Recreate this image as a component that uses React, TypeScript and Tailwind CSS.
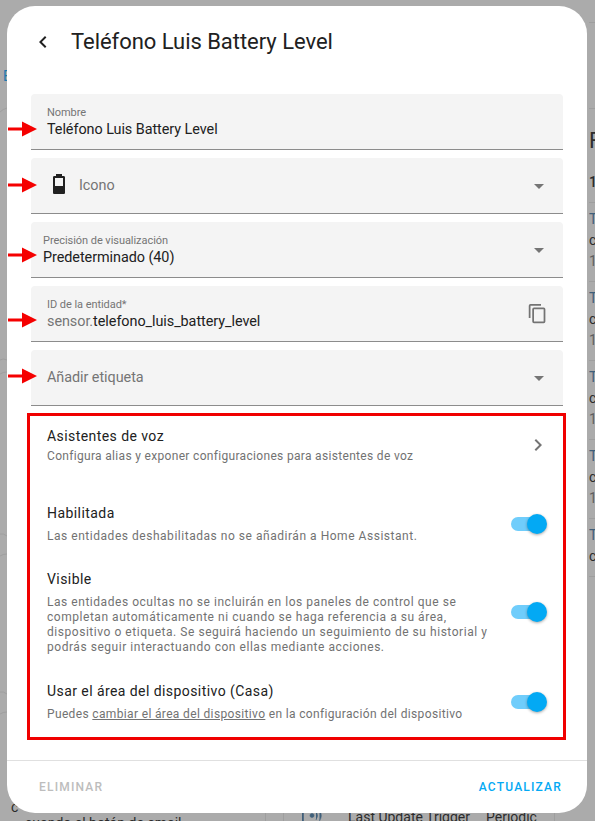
import React from "react";

const font = { fontFamily: "Roboto, 'Liberation Sans', sans-serif" };

function Arrow({ className }: { className: string }) {
  return (
    <svg className={`absolute left-[-23px] ${className}`} width="29" height="16" viewBox="0 0 29 16">
      <path d="M0 6.5h14V.5L29 8 14 15.5v-6H0z" fill="#f50000" />
    </svg>
  );
}

function Caret() {
  return (
    <svg width="24" height="24" viewBox="0 0 24 24" className="shrink-0">
      <path d="M7 10l5 5 5-5z" fill="#757575" />
    </svg>
  );
}

function Field({ className = "", arrow, children }: { className?: string; arrow: string; children: React.ReactNode }) {
  return (
    <div className={`relative h-[56px] bg-[#f4f4f4] rounded-t-[4px] border-b border-[#8c8c8c] flex ${className}`}>
      <Arrow className={arrow} />
      {children}
    </div>
  );
}

function LabelValue({ label, children }: { label: string; children: React.ReactNode }) {
  return (
    <div className="flex-1 min-w-0 self-start pt-[12px]">
      <div className="text-[11px] leading-[14px] tracking-[-0.05px] text-[#757575]">{label}</div>
      <div className="text-[14.4px] leading-[18px] mt-[1px] tracking-[-0.05px] text-[#212121]">{children}</div>
    </div>
  );
}

function Toggle() {
  return (
    <div className="relative w-[36px] h-[20px] shrink-0 flex items-center">
      <div className="w-[32px] h-[14px] rounded-full bg-[#70cdfb]" />
      <div className="absolute right-0 top-0 w-[20px] h-[20px] rounded-full bg-[#03a9f4] shadow-[0_1px_3px_rgba(0,0,0,0.35)]" />
    </div>
  );
}

function SettingRow({ title, children, className = "", descClass }: { title: string; children: React.ReactNode; className?: string; descClass: string }) {
  return (
    <div className={`flex items-center justify-between ${className}`}>
      <div className="w-[450px]">
        <div className="text-[14px] leading-[20px] tracking-[0.43px] text-[#212121]">{title}</div>
        <div className={`text-[12px] leading-[15px] text-[#727272] mt-[6px] ${descClass}`}>{children}</div>
      </div>
      <Toggle />
    </div>
  );
}

function SideItem() {
  return (
    <div className="h-[79px] border-b border-[#9e9e9e] pt-[6px] text-[14px] leading-[21px]">
      <div className="text-[#3f5f7a]">T</div>
      <div className="text-[#2b2b2b]">c</div>
      <div className="text-[#5f5f5f]">1</div>
    </div>
  );
}

export default function App() {
  return (
    <div style={font} className="relative w-[595px] h-[821px] overflow-hidden bg-[#ababab]">
      {/* dimmed page behind the dialog */}
      <div className="flex justify-between h-[800px]">
        <div className="w-[7px] relative overflow-hidden">
          <svg width="7" height="800" viewBox="0 0 7 800" className="absolute left-0 top-0">
            <path d="M0 112q3-3 7-4M0 360q3-2 7 0M0 374q3-2 7-2M0 534q3-1 7 2M0 556q3-2 7-2M0 692q3-1 7 2M0 714q3-2 7-2" fill="none" stroke="#9e9e9e" strokeWidth="1" />
          </svg>
          <div className="pl-[3px] mt-[68px] text-[14px] leading-[16px] text-[#1f78ad]">E</div>
        </div>
        <div className="w-[8px] overflow-hidden">
          <div className="w-[60px] pl-[2px] ml-0">
            <div className="h-[23px] border-b border-[#9e9e9e]" />
            <div className="h-[86px] border-b border-[#9e9e9e]" />
            <div className="h-[94px] border-b border-[#9e9e9e] pt-[18px]">
              <div className="text-[22px] leading-[28px] text-[#2d2d2d]">F</div>
              <div className="text-[14px] leading-[20px] mt-[17px] font-medium text-[#2b2b2b]">1</div>
            </div>
            <SideItem />
            <SideItem />
            <SideItem />
            <SideItem />
            <div className="h-[58px] border-b border-[#9e9e9e] pt-[6px] text-[14px] leading-[21px]">
              <div className="text-[#3f5f7a]">T</div>
              <div className="text-[#2b2b2b]">c</div>
            </div>
          </div>
        </div>
      </div>
      <div className="h-[21px] flex text-[14px] leading-[14px] text-[#2b2b2b] overflow-hidden">
        <div className="w-[266px] border-r border-[#9e9e9e] pl-[11px]">
          <div>c</div>
          <div className="pl-[14px] mt-[2px] whitespace-nowrap">cuando el botón de email</div>
        </div>
        <div className="w-[18px] border-r border-[#9e9e9e]" />
        <div className="w-[271px] border-r border-[#9e9e9e] flex pt-[10px] pl-[18px]">
          <svg width="46" height="11" viewBox="0 0 46 11" className="shrink-0">
            <path d="M0 0h1.5v11H0zM10 3.5a2 2 0 1 1 0 4 2 2 0 0 1 0-4zM14 1q3 4.5 0 9M17.5 0q3.5 5.5 0 11" fill="#3f5f7a" stroke="#3f5f7a" strokeWidth="0.6" />
          </svg>
          <span className="w-[138px] whitespace-nowrap">Last Update Trigger</span>
          <span>Periodic</span>
        </div>
      </div>

      {/* dialog */}
      <div className="absolute left-[7px] top-[6px] w-[580px] h-[807px] rounded-[28px] bg-white flex flex-col">
        <header className="h-[72px] shrink-0 flex items-center pl-[24px]">
          <svg width="24" height="24" viewBox="0 0 24 24" className="shrink-0">
            <path d="M15.41 16.58L10.83 12l4.58-4.59L14 6l-6 6 6 6z" fill="#212121" />
          </svg>
          <h1 className="ml-[16px] text-[22px] leading-[28px] tracking-[-0.04px] font-normal text-[#212121]">Teléfono Luis Battery Level</h1>
        </header>

        <div className="flex-1 px-[24px] pt-[16px]">
          <div className="flex flex-col gap-[8px]">
            <Field className="pl-[16px]" arrow="top-[27px]">
              <LabelValue label="Nombre">Teléfono Luis Battery Level</LabelValue>
            </Field>
            <Field className="pl-[16px] pr-[12px] items-center" arrow="top-[19px]">
              <svg width="24" height="24" viewBox="0 0 24 24" className="shrink-0 mb-[3px]">
                <path d="M16 14H8V6h8M16.67 4H15V2H9v2H7.33A1.33 1.33 0 0 0 6 5.33v15.34C6 21.4 6.6 22 7.33 22h9.34c.74 0 1.33-.59 1.33-1.33V5.33C18 4.6 17.4 4 16.67 4z" fill="#212121" />
              </svg>
              <div className="flex-1 ml-[8px] text-[14.4px] tracking-[-0.05px] text-[#757575]">Icono</div>
              <Caret />
            </Field>
            <Field className="pl-[12px] pr-[12px] items-center" arrow="top-[25px]">
              <LabelValue label="Precisión de visualización">Predeterminado (40)</LabelValue>
              <Caret />
            </Field>
            <Field className="pl-[16px] pr-[15px] items-center" arrow="top-[26px]">
              <LabelValue label="ID de la entidad*">
                <span className="text-[#757575]">sensor.</span>telefono_luis_battery_level
              </LabelValue>
              <svg width="21" height="21" viewBox="0 0 24 24" className="shrink-0">
                <path d="M19 21H8V7h11M19 5H8a2 2 0 0 0-2 2v14a2 2 0 0 0 2 2h11a2 2 0 0 0 2-2V7a2 2 0 0 0-2-2M16 1H4a2 2 0 0 0-2 2v14h2V3h12V1z" fill="#737373" />
              </svg>
            </Field>
            <Field className="pl-[16px] pr-[12px] items-center" arrow="top-[18px]">
              <div className="flex-1 text-[14.4px] tracking-[-0.05px] text-[#757575]">Añadir etiqueta</div>
              <Caret />
            </Field>
          </div>

          <section className="ml-[-4px] mt-[7px] w-[539px] h-[327px] border-[3px] border-[#f00000] pl-[17px] pr-[16px] pt-[10px]">
            <div className="flex items-center justify-between">
              <div>
                <div className="text-[14px] leading-[20px] tracking-[0.43px] text-[#212121]">Asistentes de voz</div>
                <div className="text-[12px] leading-[15px] tracking-[0.32px] text-[#727272] mt-[3px]">Configura alias y exponer configuraciones para asistentes de voz</div>
              </div>
              <svg width="24" height="24" viewBox="0 0 24 24" className="shrink-0 mr-[-3px]">
                <path d="M8.59 16.58L13.17 12 8.59 7.41 10 6l6 6-6 6z" fill="#757575" />
              </svg>
            </div>
            <SettingRow title="Habilitada" className="mt-[39px]" descClass="tracking-[0.53px]">Las entidades deshabilitadas no se añadirán a Home Assistant.</SettingRow>
            <SettingRow title="Visible" className="mt-[25px]" descClass="tracking-[0.54px]">
              Las entidades ocultas no se incluirán en los paneles de control que se completan automáticamente ni cuando se haga referencia a su área, dispositivo o etiqueta. Se seguirá haciendo un seguimiento de su historial y podrás seguir interactuando con ellas mediante acciones.
            </SettingRow>
            <SettingRow title="Usar el área del dispositivo (Casa)" className="mt-[26px]" descClass="tracking-[0.35px]">
              Puedes <span className="underline">cambiar el área del dispositivo</span> en la configuración del dispositivo
            </SettingRow>
          </section>
        </div>

        <footer className="h-[53px] shrink-0 border-t border-[#e0e0e0] flex items-center justify-between pl-[32px] pr-[25px] text-[12px] font-medium tracking-[1.2px]">
          <span className="text-[#bdbdbd]">ELIMINAR</span>
          <span className="text-[#03a9f4]">ACTUALIZAR</span>
        </footer>
      </div>
    </div>
  );
}
